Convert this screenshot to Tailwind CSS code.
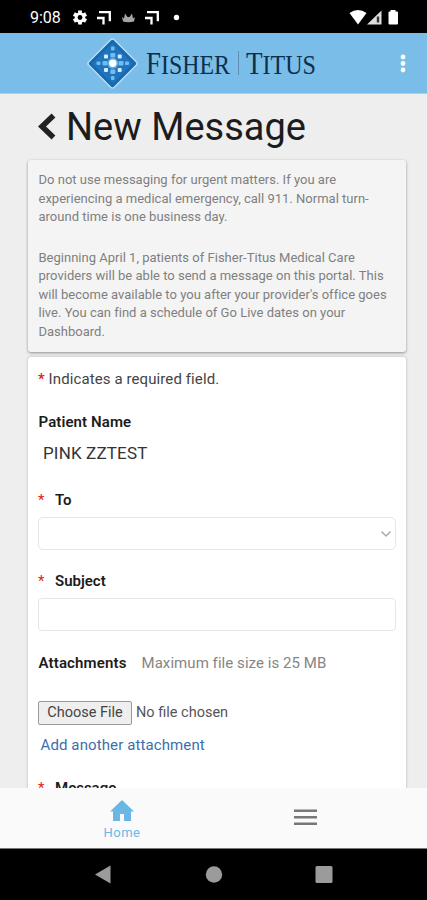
<!DOCTYPE html>
<html lang="en">
<head>
<meta charset="utf-8">
<title>New Message</title>
<script src="https://cdn.jsdelivr.net/npm/@tailwindcss/browser@4"></script>
</head>
<body class="w-[427px] h-[900px] overflow-hidden bg-[#eeeeee] font-[Roboto,sans-serif] flex flex-col">
<div class="h-[33px] shrink-0 bg-black text-white flex items-center">
  <span class="ml-[30px] mt-[3px] w-[43px] text-[16px] leading-none">9:08</span>
  <svg class="mt-[2px]" width="112" height="18" viewBox="73 9 112 18">
    <g fill="#fff">
      <circle cx="80" cy="17.500" r="5.200"/>
      <path d="M78.100 10.500h3.800v3.500h-3.800zM78.100 21h3.800v3.500h-3.800z"/>
      <path d="M78.100 10.500h3.800v3.500h-3.800zM78.100 21h3.800v3.500h-3.800z" transform="rotate(60 80 17.500)"/>
      <path d="M78.100 10.500h3.800v3.500h-3.800zM78.100 21h3.800v3.500h-3.800z" transform="rotate(120 80 17.500)"/>
    </g>
    <circle cx="80" cy="17.500" r="2.400" fill="#000"/>
    <g fill="none" stroke="#fff" stroke-width="2.300"><path d="M99 12.200h10.800v9M97 18h6.500v6.500"/><path d="M147 12.200h10.800v9M145 18h6.500v6.500"/></g>
    <path d="M122 17l2 1.500 1-5 2.500 3.500h2l2.500-3.500 1 5 2-1.500-1 4.500q-6 1.500-11 0z" fill="#a5a5a5"/>
    <circle cx="176.500" cy="17.500" r="2.700" fill="#fff"/>
  </svg>
  <svg class="ml-auto mr-[22px] mt-[2px]" width="60" height="18" viewBox="345 9 60 18">
    <path d="M349.500 13q8.500-6 17 0l-8.500 11.500z" fill="#fff"/>
    <path d="M367 24.500L381.500 10.500v14z" fill="#ddd"/><path d="M376.800 16.500h2.400v6h-2.400z" fill="#333"/>
    <path d="M388.500 12.500q0-1 1-1h1V10h5v1.500h1.500q1 0 1 1v11q0 1-1 1h-7.500q-1 0-1-1z" fill="#fff"/>
  </svg>
</div>
<header class="h-[61px] shrink-0 bg-[#79bde8] border-b border-[#a9cfe9] flex items-center justify-between">
  <svg class="ml-[84px]" width="240" height="60" viewBox="84 33 240 60">
    <rect x="94.500" y="45.500" width="36" height="36" rx="2.500" transform="rotate(45 112.500 63.500)" fill="#1768b1" stroke="#b3def7" stroke-width="1.500"/>
    <rect x="98" y="49" width="29" height="29" rx="2" transform="rotate(45 112.500 63.500)" fill="#1f74bd"/>
    <circle cx="112.800" cy="63.300" r="5.500" fill="#5cabe6"/>
    <g fill="#72bcf0">
      <rect x="111" y="46.500" width="3.500" height="4" rx="1"/><rect x="111" y="76" width="3.500" height="4" rx="1"/>
      <rect x="96.500" y="61.500" width="4" height="3.500" rx="1"/><rect x="125" y="61.500" width="4" height="3.500" rx="1"/>
      <rect x="110.300" y="53" width="5" height="4.500" rx="1"/><rect x="110.300" y="69.500" width="5" height="4.500" rx="1"/>
      <rect x="102.500" y="61" width="5" height="4.500" rx="1"/><rect x="118.500" y="61" width="5" height="4.500" rx="1"/>
    </g>
    <g fill="#d5efff">
      <rect x="104" y="54.500" width="4" height="4" rx="1"/><rect x="117.700" y="54.500" width="4" height="4" rx="1"/>
      <rect x="104" y="68" width="4" height="4" rx="1"/><rect x="117.700" y="68" width="4" height="4" rx="1"/>
    </g>
    <circle cx="112.800" cy="63.300" r="3.700" fill="#fff"/>
    <g fill="#0d2f4c" font-family="Liberation Serif, serif">
      <text x="146" y="74" textLength="84" lengthAdjust="spacingAndGlyphs" font-size="31">F<tspan font-size="27.500">ISHER</tspan></text>
      <text x="246" y="74" textLength="70" lengthAdjust="spacingAndGlyphs" font-size="31">T<tspan font-size="27.500">ITUS</tspan></text>
    </g>
    <path d="M238.500 51v24" stroke="#5a8fb3"/>
  </svg>
  <svg class="mr-[18px]" width="12" height="20" viewBox="0 0 12 20" fill="#fff"><circle cx="6" cy="4" r="2.400"/><circle cx="6" cy="10.500" r="2.400"/><circle cx="6" cy="17" r="2.400"/></svg>
</header>
<main class="h-[694px] shrink-0 overflow-hidden pl-[28px] pr-[21px]">
  <div class="h-[66px] flex items-center pl-[10px]">
    <svg width="19" height="28" viewBox="0 0 19 28" fill="none" stroke="#222" stroke-width="5.500"><path d="M15.500 2.500L4 13.500l11.500 11"/></svg>
    <h1 class="ml-[9px] text-[38px] leading-[66px] text-[#1c1c1c] whitespace-nowrap">New Message</h1>
  </div>
  <section class="h-[192px] rounded-[3px] bg-[#f4f4f4] shadow-[0_1px_3px_rgba(0,0,0,0.4)] pt-[11px] pl-[10.500px] text-[13px] leading-[18.500px] tracking-[0.010px] text-[#808080] whitespace-nowrap">
    <p>Do not use messaging for urgent matters. If you are<br>experiencing a medical emergency, call 911. Normal turn-<br>around time is one business day.</p>
    <p class="mt-[22px]">Beginning April 1, patients of Fisher-Titus Medical Care<br>providers will be able to send a message on this portal. This<br>will become available to you after your provider's office goes<br>live. You can find a schedule of Go Live dates on your<br>Dashboard.</p>
  </section>
  <section class="mt-[5px] h-[500px] rounded-[3px] bg-white shadow-[0_0_3px_rgba(0,0,0,0.25)] px-[10px] text-[15px] text-[#1c1c1c] whitespace-nowrap">
    <p class="pt-[12px] leading-[20px] tracking-[0.100px] text-[#444]"><span class="text-[#e01b1b] font-medium">*</span> Indicates a required field.</p>
    <p class="mt-[23px] leading-[20px] ml-[0.500px] tracking-[0.100px] font-semibold">Patient Name</p>
    <p class="mt-[10px] ml-[5px] leading-[22px] text-[17px] tracking-[0.150px] text-[#333]">PINK ZZTEST</p>
    <label class="mt-[26px] h-[20px] leading-[20px] flex font-semibold"><span class="w-[17px] font-normal text-[#e01b1b]">*</span>To</label>
    <div class="mt-[7px] h-[33px] rounded-[5px] border border-[#e6e6e6] flex items-center justify-end pr-[3px]">
      <svg width="12" height="8" viewBox="0 0 12 8" fill="none" stroke="#aaa" stroke-width="1.500"><path d="M1.500 1.500L6 6l4.500-4.500"/></svg>
    </div>
    <label class="mt-[21px] h-[20px] leading-[20px] flex font-semibold"><span class="w-[17px] font-normal text-[#e01b1b]">*</span>Subject</label>
    <div class="mt-[7px] h-[33px] rounded-[4px] border border-[#e6e6e6]"></div>
    <div class="mt-[22px] h-[20px] leading-[20px] flex"><span class="w-[103px] ml-[0.500px] font-semibold tracking-[0.150px]">Attachments</span><span class="text-[#858585] tracking-[0.060px]">Maximum file size is 25 MB</span></div>
    <div class="mt-[28px] h-[24px] flex items-center leading-[20px] text-[14.500px] text-[#555]"><span class="w-[94px] h-[24px] rounded-[2px] border border-[#999] bg-[#efefef] text-center leading-[22px] text-[#444]">Choose File</span><span class="ml-[4px]">No file chosen</span></div>
    <a class="block mt-[10px] ml-[2.500px] leading-[20px] tracking-[0.110px] text-[#3b6fab]">Add another attachment</a>
    <label class="mt-[23px] h-[20px] leading-[20px] flex font-semibold"><span class="w-[17px] font-normal text-[#e01b1b]">*</span>Message</label>
  </section>
</main>
<nav class="h-[61px] shrink-0 bg-[#fafafa] border-b border-[#777] flex">
  <div class="w-[244px] flex flex-col items-center pt-[11px] text-[#6ab7e6]">
    <svg width="24" height="23" viewBox="0 0 24 23" fill="currentColor"><path d="M12 1L0 12.500h3V22h7v-7h4v7h7v-9.500h3z"/></svg>
    <span class="mt-[3px] text-[13px] leading-[16px] tracking-[0.500px]">Home</span>
  </div>
  <svg class="ml-[50px] mt-[21px]" width="23" height="17" viewBox="0 0 23 17" fill="#777"><path d="M0 .500h23v2.500H0zM0 7h23v2.500H0zM0 13.500h23V16H0z"/></svg>
</nav>
<div class="h-[51px] shrink-0 bg-black">
  <svg width="427" height="51" viewBox="0 849 427 51" fill="#9b9b9b"><path d="M95 874.500l15.500-9v18z"/><circle cx="214" cy="874.500" r="8.200"/><rect x="315.500" y="866" width="17" height="17" rx="1.500"/></svg>
</div>
</body>
</html>
